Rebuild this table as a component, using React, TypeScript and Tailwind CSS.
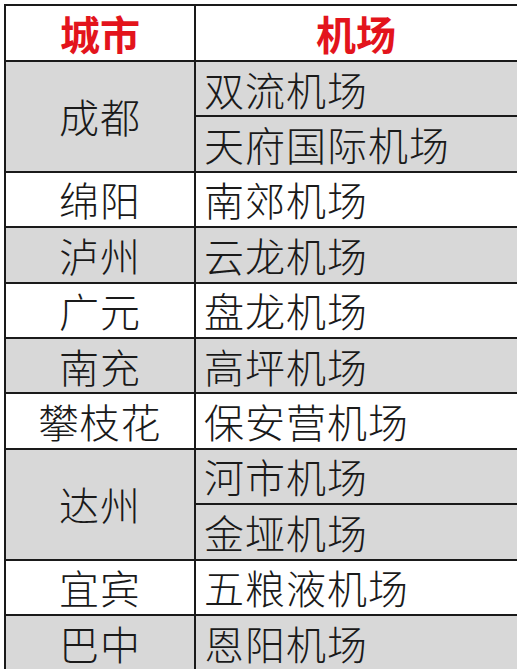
const rows: { city: string; airports: string[]; gray: boolean }[] = [
  { city: "成都", airports: ["双流机场", "天府国际机场"], gray: true },
  { city: "绵阳", airports: ["南郊机场"], gray: false },
  { city: "泸州", airports: ["云龙机场"], gray: true },
  { city: "广元", airports: ["盘龙机场"], gray: false },
  { city: "南充", airports: ["高坪机场"], gray: true },
  { city: "攀枝花", airports: ["保安营机场"], gray: false },
  { city: "达州", airports: ["河市机场", "金垭机场"], gray: true },
  { city: "宜宾", airports: ["五粮液机场"], gray: false },
  { city: "巴中", airports: ["恩阳机场"], gray: true },
];

const font = { fontFamily: '"Noto Sans CJK SC", "Noto Sans", sans-serif' };

export default function App() {
  return (
    <div className="w-[517px] h-[669px] overflow-hidden bg-white pt-[4px] pl-[4px]" style={font}>
      <div className="w-[540px] border-l-2 border-[#1a1a1a] text-[40px] font-light leading-none text-[#1a1a1a]">
        <div className="flex h-[56px] border-t-2 border-[#1a1a1a] bg-white">
          <div className="w-[190px] shrink-0 flex items-center justify-center border-r-2 border-[#1a1a1a] font-bold text-[#e3141c]">
            城市
          </div>
          <div className="w-[320px] flex items-center justify-center font-bold text-[#e3141c]">
            机场
          </div>
        </div>
        {rows.map((r) => (
          <div
            key={r.city}
            className={`flex border-t-2 border-[#1a1a1a] ${r.airports.length > 1 ? "h-[110.8px]" : "h-[55.4px]"} ${r.gray ? "bg-[#d8d8d8]" : "bg-white"}`}
          >
            <div className="w-[190px] shrink-0 flex items-center justify-center border-r-2 border-[#1a1a1a] tracking-[1px]">
              {r.city}
            </div>
            <div className="flex flex-col grow">
              {r.airports.map((a, i) => (
                <div
                  key={a}
                  className={`flex-1 flex items-center pl-[8px] tracking-[1px] ${i > 0 ? "border-t-2 border-[#1a1a1a]" : ""}`}
                >
                  {a}
                </div>
              ))}
            </div>
          </div>
        ))}
      </div>
    </div>
  );
}
